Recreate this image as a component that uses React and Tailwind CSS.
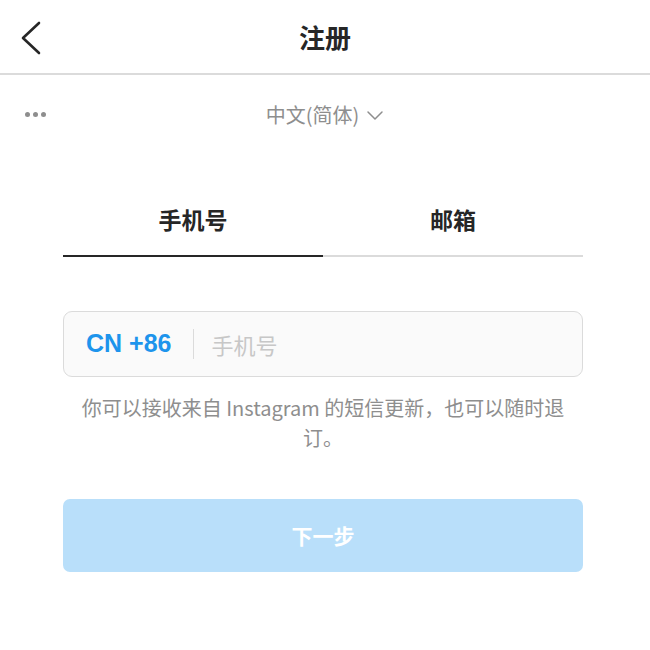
import React, { useState } from 'react';

const font = { fontFamily: '"Noto Sans CJK SC", "Liberation Sans", sans-serif' };

function BackIcon() {
  return (
    <svg width="24" height="36" viewBox="0 0 24 36" fill="none">
      <path d="M19 3 L3 18 L19 33" stroke="#262626" strokeWidth="2.6" strokeLinecap="round" strokeLinejoin="round" />
    </svg>
  );
}

function ChevronDown() {
  return (
    <svg width="18" height="12" viewBox="0 0 18 12" fill="none">
      <path d="M2 3 L9 10 L16 3" stroke="#8e8e8e" strokeWidth="1.5" strokeLinecap="round" strokeLinejoin="round" />
    </svg>
  );
}

export default function App() {
  const [tab, setTab] = useState('phone');
  const [phone, setPhone] = useState('');

  return (
    <div className="w-[650px] h-[650px] bg-white overflow-hidden" style={font}>
      {/* top bar */}
      <div className="h-[75px] border-b-2 border-[#dbdbdb] flex items-center relative">
        <button className="absolute left-[20px] top-[20px]">
          <BackIcon />
        </button>
        <h1 className="w-full text-center text-[26px] font-bold text-[#262626] leading-none">注册</h1>
      </div>

      {/* language row */}
      <div className="h-[82px] flex items-center relative">
        <div className="absolute left-[25px] top-[37px] flex gap-[3px]">
          <span className="w-[5px] h-[5px] rounded-full bg-[#8e8e8e]" />
          <span className="w-[5px] h-[5px] rounded-full bg-[#8e8e8e]" />
          <span className="w-[5px] h-[5px] rounded-full bg-[#8e8e8e]" />
        </div>
        <div className="w-full flex justify-center items-center gap-[7px] pb-[2px] text-[20px] text-[#8e8e8e]">
          <span>中文(简体)</span>
          <ChevronDown />
        </div>
      </div>

      <div className="ml-[63px] w-[520px]">
        {/* tabs */}
        <div className="flex mt-[34px]">
          <button
            onClick={() => setTab('phone')}
            className={`flex-1 h-[66px] pb-[8px] text-[23px] font-semibold text-[#262626] border-b-2 ${tab === 'phone' ? 'border-[#262626]' : 'border-[#dbdbdb]'}`}
          >
            手机号
          </button>
          <button
            onClick={() => setTab('email')}
            className={`flex-1 h-[66px] pb-[8px] text-[23px] font-semibold text-[#262626] border-b-2 ${tab === 'email' ? 'border-[#262626]' : 'border-[#dbdbdb]'}`}
          >
            邮箱
          </button>
        </div>

        {/* phone input */}
        <div className="mt-[54px] h-[66px] rounded-[9px] border border-[#dbdbdb] bg-[#fafafa] flex items-center">
          <span className="pl-[22px] pr-[22px] text-[25px] font-bold text-[#1d94ec]" style={{ fontFamily: '"Liberation Sans", sans-serif' }}>
            CN +86
          </span>
          <span className="w-px h-[30px] bg-[#dbdbdb]" />
          <input
            value={phone}
            onChange={(e) => setPhone(e.target.value)}
            placeholder="手机号"
            className="flex-1 min-w-0 pl-[17px] bg-transparent outline-none text-[22px] text-[#262626] placeholder:text-[#c7c7c7]"
          />
        </div>

        <p className="mt-[16px] px-[10px] text-center text-[20px] leading-[30px] text-[#8e8e8e]">
          你可以接收来自 Instagram 的短信更新，也可以随时退订。
        </p>

        {/* next */}
        <button className="mt-[46px] w-full h-[73px] rounded-[7px] bg-[#b9dffa] text-white text-[21px] font-bold">
          下一步
        </button>
      </div>
    </div>
  );
}
